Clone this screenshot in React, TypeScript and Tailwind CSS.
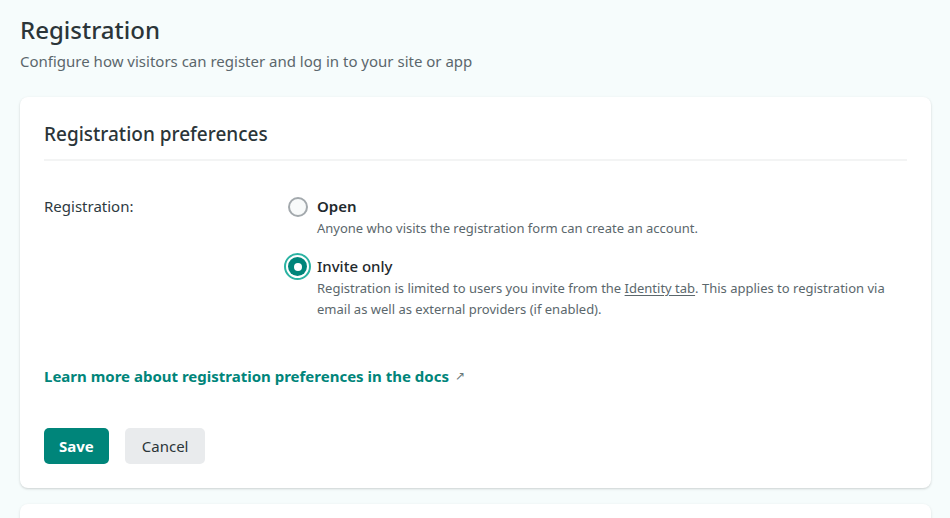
import { useState } from "react";

const font = { fontFamily: '"Noto Sans", "Open Sans", Arial, sans-serif' };

function Radio({ checked }: { checked: boolean }) {
    if (checked) {
        return (
            <span className="flex size-[27px] shrink-0 items-center justify-center rounded-full border-[2px] border-[#2bb3a3] bg-white">
                <span className="flex size-[19px] items-center justify-center rounded-full bg-[#00857a]">
                    <span className="size-[8px] rounded-full bg-white" />
                </span>
            </span>
        );
    }
    return (
        <span className="flex size-[27px] shrink-0 items-center justify-center">
            <span className="size-[20px] rounded-full border-[2px] border-[#a3a9ad] bg-[#f8fafa]" />
        </span>
    );
}

export default function App() {
    const [mode, setMode] = useState<"open" | "invite">("invite");

    return (
        <div className="h-[518px] overflow-hidden bg-[#f6fcfc] px-5 pt-[14px] text-[#2e3a3f]" style={font}>
            <h1 className="text-[24px] leading-8 font-medium text-[#2b3539]">Registration</h1>
            <p className="mt-[3px] text-[15px] leading-6 text-[#5b676c]">
                Configure how visitors can register and log in to your site or app
            </p>

            {/* 設定カード */}
            <section className="mt-[24px] w-[911px] rounded-lg bg-white px-6 pt-[23px] pb-6 shadow-[0_1px_3px_rgba(0,0,0,0.12),0_1px_2px_rgba(0,0,0,0.06)]">
                <h2 className="border-b-2 border-[#f3f4f4] pb-[11px] text-[19px] leading-7 font-medium text-[#2b3539]">
                    Registration preferences
                </h2>

                <div className="mt-[32px] flex">
                    <div className="w-[240px] pt-[1px] text-[15px] leading-6 text-[#2e3a3f]">Registration:</div>
                    <div className="flex flex-col gap-[14px]">
                        <label className="flex cursor-pointer gap-[6px]" onClick={() => setMode("open")}>
                            <Radio checked={mode === "open"} />
                            <div>
                                <div className="pt-[1px] text-[15px] leading-6 font-semibold text-[#1f2a2e]">Open</div>
                                <div className="text-[13px] leading-[21px] text-[#5b676c]">
                                    Anyone who visits the registration form can create an account.
                                </div>
                            </div>
                        </label>
                        <label className="flex cursor-pointer gap-[6px]" onClick={() => setMode("invite")}>
                            <Radio checked={mode === "invite"} />
                            <div>
                                <div className="pt-[1px] text-[15px] leading-6 font-medium text-[#1f2a2e]">Invite only</div>
                                <div className="w-[590px] text-[13px] leading-[21px] text-[#5b676c]">
                                    Registration is limited to users you invite from the{" "}
                                    <a href="#" className="underline underline-offset-2">Identity tab</a>. This applies to
                                    registration via email as well as external providers (if enabled).
                                </div>
                            </div>
                        </label>
                    </div>
                </div>

                <a href="#" className="mt-[44px] inline-flex items-center gap-[6px] text-[15px] leading-6 font-bold text-[#00857a]">
                    Learn more about registration preferences in the docs
                    <span className="text-[12px] font-normal text-[#6b7a7a]">↗</span>
                </a>

                <div className="mt-[40px] flex gap-4">
                    <button className="h-9 rounded-[5px] bg-[#00857a] px-[15px] text-[15px] font-bold text-white">Save</button>
                    <button className="h-9 rounded-[5px] bg-[#e9ebed] px-[17px] text-[15px] text-[#2b3539]">Cancel</button>
                </div>
            </section>

            <section className="mt-4 h-10 w-[911px] rounded-lg bg-white shadow-[0_1px_3px_rgba(0,0,0,0.12)]" />
        </div>
    );
}
